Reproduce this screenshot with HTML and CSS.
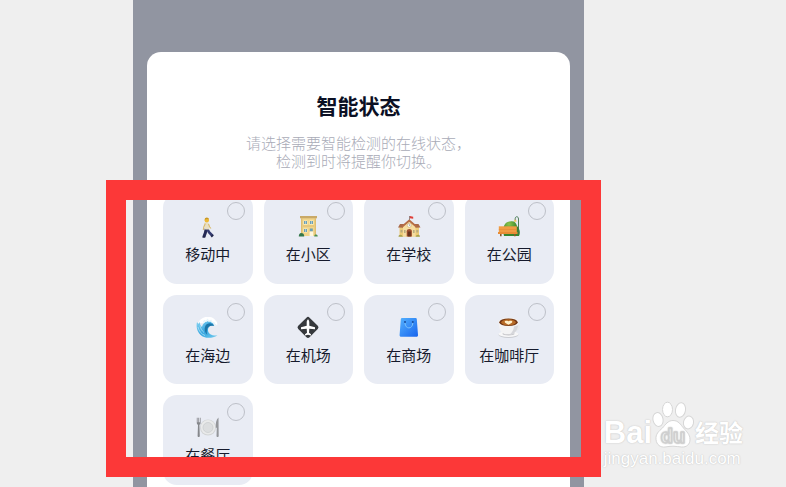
FILE: index.html
```html
<!DOCTYPE html>
<html lang="zh-CN">
<head>
    <meta charset="UTF-8">
    <meta name="viewport" content="width=device-width, initial-scale=1.0">
    <title>智能状态</title>
    <link rel="stylesheet" href="styles.css">
</head>
<body>
<div class="page">
    <main class="phone">
        <form class="sheet">
            <h1>智能状态</h1>
            <p class="desc">请选择需要智能检测的在线状态，<br>检测到时将提醒你切换。</p>
            <div class="status-grid">
                <label class="status">
                    <input type="checkbox" name="status" value="moving">
                    <svg class="icon" viewBox="0 0 24 24" aria-hidden="true">
                        <path d="M10.300 14.500 9.300 19 8 22.500" fill="none" stroke="#252a55" stroke-width="3"/>
                        <path d="M11 14.500l2 3.700 3.200 3.300" fill="none" stroke="#343b70" stroke-width="2.600"/>
                        <path d="M6.500 22h2.800v1.800H6.500zM14.600 22l2.400-1.800.8 1.300-2 2z" fill="#20264b"/>
                        <path d="M8.500 8.500l4.200.3.700 6.800-4.600-.2z" fill="#e9dfc2"/>
                        <path d="M9.300 9.500 7.800 13l-.5 3M12.500 10l1.200 3 1.300 1.500" fill="none" stroke="#d8b96c" stroke-width="1.100"/>
                        <circle cx="10.800" cy="6.300" r="2.200" fill="#edb936"/>
                        <path d="M8.600 5.800c.2-3 4.200-3 4.400-.2l-2-.5z" fill="#c99722"/>
                    </svg>
                    <span>移动中</span>
                </label>
                <label class="status">
                    <input type="checkbox" name="status" value="community">
                    <svg class="icon" viewBox="0 0 24 24" aria-hidden="true">
                        <path d="M5 3h15v19H5z" fill="#f0d58c"/>
                        <path d="M4 2h17v2.300H4z" fill="#c9a968"/>
                        <path d="M5 4.300h1.400V22H5zM18.600 4.300H20V22h-1.400z" fill="#dfbe70"/>
                        <path d="M7.500 6.500h4v4.300h-4zM13.500 6.500h4v4.300h-4zM7.500 14.500h4v4h-4z" fill="#fff0bb"/>
                        <path d="M8 7h3v3H8zM14 7h3v3h-3zM8 15h3v3H8zM13.800 14.500h3v3h-3z" fill="#6da0b6"/>
                        <path d="M9.300 7h.5v3h-.5zM15.300 7h.5v3h-.5zM9.300 15h.5v3h-.5z" fill="#e5eff0"/>
                        <path d="M13.600 17.500h3.600V22h-3.600z" fill="#fff7dc"/>
                        <path d="M7 11.600h11v.8H7z" fill="#d9b667"/>
                        <path d="M2.800 22.500c0-2.400 1.200-3.800 3-3.300 1.500-.4 2.600 1.500 2.400 3.300z" fill="#34784b"/>
                        <path d="M18.200 22.500c0-1.600 1-2.200 2-2 1.200 0 1.600 1 1.500 2z" fill="#4c9050"/>
                    </svg>
                    <span>在小区</span>
                </label>
                <label class="status">
                    <input type="checkbox" name="status" value="school">
                    <svg class="icon" viewBox="0 0 24 24" aria-hidden="true">
                        <path d="M12 2h.8v5H12z" fill="#777"/>
                        <path d="M12.800 2l3.400.7v2l-3.400-.5z" fill="#df3f38"/>
                        <path d="M2.500 13h19.500v9.500H2.500z" fill="#edcb78"/>
                        <path d="M1 13.500 3 10h6l-2 3.800zM23.500 13.500 21.500 10h-6l2 3.800z" fill="#aa6a49"/>
                        <path d="M6 22.500V12l6.300-5 6.200 5v10.500z" fill="#f6dda0"/>
                        <path d="M5 12.700l7.300-6.200 7.200 6.200" fill="none" stroke="#b66d46" stroke-width="1.800"/>
                        <circle cx="12.300" cy="11.300" r="2" fill="#fff" stroke="#c6a568" stroke-width=".6"/>
                        <path d="M12.300 10v1.500h1" fill="none" stroke="#666" stroke-width=".5"/>
                        <path d="M9.700 22.500v-5.200c0-3 5.200-3 5.200 0v5.200z" fill="#a1502e"/>
                        <path d="M10.800 22.500v-5h3v5z" fill="#693520"/>
                        <path d="M3.500 16h2v2.500h-2zM7 16h1.600v3H7zM16 16h1.600v3H16zM19.300 16h2v2.500h-2z" fill="#b9ac80"/>
                        <path d="M1.500 22.800c-.2-2.800 3.500-2.800 4.500 0zM18.600 22.800c.5-2.400 4.400-2.800 4.400 0z" fill="#a7a250"/>
                    </svg>
                    <span>在学校</span>
                </label>
                <label class="status">
                    <input type="checkbox" name="status" value="park">
                    <svg class="icon" viewBox="0 0 24 24" aria-hidden="true">
                        <defs>
                            <radialGradient id="bush" cx=".35" cy=".2">
                                <stop offset="0" stop-color="#8dc54a"/>
                                <stop offset="1" stop-color="#37852e"/>
                            </radialGradient>
                        </defs>
                        <path d="M7 22c-2-7 0-14.500 6-14.500 4-1 6 1 7 4.500 3 3 3.500 7 2 10z" fill="url(#bush)"/>
                        <path d="M21.500 20V5c0-3-3.300-3-3.300-.300V6" fill="none" stroke="#41744d" stroke-width=".9"/>
                        <path d="M17.300 5.800h1.900l.3 2H17z" fill="#efc45b"/>
                        <path d="M1.800 12.300h18v6H1.800z" fill="#f19c43"/>
                        <path d="M1.800 15.300h18v.4h-18z" fill="#dd842f"/>
                        <path d="M1 18h19.500v2H1z" fill="#e88c35"/>
                        <path d="M3 20h1.600v2.300H3zM17 20h1.600v2.300H17z" fill="#8b5929"/>
                    </svg>
                    <span>在公园</span>
                </label>
                <label class="status">
                    <input type="checkbox" name="status" value="seaside">
                    <svg class="icon" viewBox="0 0 24 24" aria-hidden="true">
                        <defs>
                            <linearGradient id="wave" x1="0" y1="0" x2="1" y2="1">
                                <stop offset="0" stop-color="#8bd6f3"/>
                                <stop offset=".5" stop-color="#36a5df"/>
                                <stop offset="1" stop-color="#75cef0"/>
                            </linearGradient>
                        </defs>
                        <path d="M2 8C4 4 8 1.500 12 2.200c3-.8 6 .8 7.300 3 2 1.500 2.500 3.600 1.700 5.200-2-2.600-5-3.700-8-2z" fill="#fff"/>
                        <path d="M1 7c-1.500 6 1 12.500 7 15 4 1.500 9 1 13.500-1.500-5.500.5-9-1.200-9.500-5-.4-3.500 2.400-5.800 6.300-4.700C16.800 6.500 12 4.700 8.500 7.700 7 9 6.200 10.500 6 12 4.200 10.500 3.500 8.500 4 6.500L2.500 9z" fill="url(#wave)"/>
                        <path d="M18.300 10.800C16 7.200 11 7.500 9.300 11c-1.300 3.100-.6 6.400 2 8.900-1.300-4.600-.1-8.700 4-9.200 1.200-.1 2-.1 3 .1z" fill="#1d76a8"/>
                        <path d="M2 12c1 4 3 7 7 8.500M4 10.500c.5 3 2 5.500 4 7" fill="none" stroke="#b9e8f8" stroke-width=".7"/>
                        <path d="M7 7.500l1.500-2 1.500 1 1.500-2 1.500 1.700 2-1 1 2 2 .3.500 2.200 1.700.7" fill="none" stroke="#e6f5fb" stroke-width="1.200"/>
                    </svg>
                    <span>在海边</span>
                </label>
                <label class="status">
                    <input type="checkbox" name="status" value="airport">
                    <svg class="icon" viewBox="0 0 24 24" aria-hidden="true">
                        <rect x="4" y="4.400" width="16" height="16" rx="2.200" transform="rotate(45 12 12.400)" fill="#36393d"/>
                        <path d="M12 4.200c-1 .8-1.300 2-1.300 3.300v3.200L5 12.200v2l5.700-.4.300 4-2 1.500v1.200l3-.7 3 .7v-1.200l-2-1.500.300-4 5.700.4v-2l-5.700-1.500V7.500c0-1.300-.3-2.500-1.300-3.300z" fill="#fff"/>
                    </svg>
                    <span>在机场</span>
                </label>
                <label class="status">
                    <input type="checkbox" name="status" value="mall">
                    <svg class="icon" viewBox="0 0 24 24" aria-hidden="true">
                        <defs>
                            <linearGradient id="bag" x1="0" y1="0" x2="1" y2="1">
                                <stop offset="0" stop-color="#53b1ff"/>
                                <stop offset="1" stop-color="#1764ed"/>
                            </linearGradient>
                        </defs>
                        <path d="M5 3h13.500c.8 0 1.200.4 1.300 1.200L21 20c.1 1.200-.6 1.800-1.600 1.800H4.200c-1 0-1.700-.7-1.600-1.800L3.800 4.200C3.900 3.400 4.300 3 5 3z" fill="url(#bag)"/>
                        <circle cx="8" cy="7" r="1" fill="#174a9c"/>
                        <circle cx="15.800" cy="7" r="1" fill="#174a9c"/>
                        <path d="M8 8.300c.3 6.300 7.500 6.300 7.800 0" fill="none" stroke="#7cc2fb" stroke-width="1" stroke-linecap="round"/>
                    </svg>
                    <span>在商场</span>
                </label>
                <label class="status">
                    <input type="checkbox" name="status" value="cafe">
                    <svg class="icon" viewBox="0 0 24 24" aria-hidden="true">
                        <ellipse cx="11.500" cy="19.700" rx="10" ry="3.200" fill="#c9cbd0"/>
                        <ellipse cx="11.500" cy="19" rx="10" ry="3" fill="#f7f7f8"/>
                        <ellipse cx="11.500" cy="18.800" rx="6" ry="1.700" fill="#c6c6ca"/>
                        <path d="M19.500 9.500c4 .2 3.500 5.700-2 5.800" fill="none" stroke="#e7e8ea" stroke-width="1.600"/>
                        <path d="M1.800 7c0 6 1.200 10 6 12.200h7.400c4.500-2 6-6.500 6-12.200z" fill="#f3f3f4"/>
                        <path d="M17 11.500c-.4 3.500-1.800 6-4 7.700h2.200c4-1.800 5.500-5.200 5.900-9z" fill="#d5d6da"/>
                        <ellipse cx="11.500" cy="7" rx="9.900" ry="4.200" fill="#f7f4ef"/>
                        <ellipse cx="11.500" cy="7.200" rx="9.200" ry="3.800" fill="#713715"/>
                        <ellipse cx="11.500" cy="7.300" rx="7.200" ry="3" fill="#b86b26"/>
                        <path d="M11.500 9.700C5.500 7.500 7.500 4.800 11.500 6.200c4-1.400 6 1.300 0 3.500z" fill="#fff1ca"/>
                    </svg>
                    <span>在咖啡厅</span>
                </label>
                <label class="status">
                    <input type="checkbox" name="status" value="restaurant">
                    <svg class="icon" viewBox="0 0 24 24" aria-hidden="true">
                        <circle cx="12" cy="12.500" r="8" fill="#d2d4d5"/>
                        <circle cx="12" cy="12.300" r="7.200" fill="#e9eaea"/>
                        <circle cx="12" cy="12.500" r="5" fill="#dcdedf" stroke="#c4c7c9" stroke-width=".6"/>
                        <path d="M.8 2.800v5c0 1.200.5 1.800 1.200 2L1.600 21c0 1.300 2.200 1.300 2.200 0L3.400 9.800c.8-.2 1.200-.8 1.200-2v-5h-.8v4.500H3V2.800h-.7v4.500h-.7V2.800z" fill="#85878b"/>
                        <path d="M22.500 2.500c-2.300 2-3 6-2.700 10.200h1L20.500 21c0 1.300 2.200 1.300 2.200 0z" fill="#94969a"/>
                    </svg>
                    <span>在餐厅</span>
                </label>
            </div>
        </form>
        <div class="highlight"></div>
    </main>
    <div class="watermark">
        <div class="brand">
            <span class="bai">Bai</span>
            <svg class="paw" viewBox="0 0 43 47" aria-label="du">
                <g fill="#fff" stroke="#d6d6d6">
                    <ellipse cx="6" cy="18.500" rx="5" ry="7" transform="rotate(-12 6 18.500)"/>
                    <ellipse cx="15.500" cy="8.500" rx="5" ry="7.300"/>
                    <ellipse cx="28.500" cy="9" rx="5" ry="7.300" transform="rotate(10 28.500 9)"/>
                    <ellipse cx="36.500" cy="21.500" rx="5" ry="6.500" transform="rotate(12 36.500 21.500)"/>
                    <path d="M21 19.500c-5 0-7.500 4-10.500 7.500C6.500 30.500 3.500 33 4 38.500c.6 5.500 4.500 8 9 7.500 3-.4 5-.8 8-.8s5.500.6 8.500.8c5 .4 8.500-2.500 8.500-7.500s-3.500-8-6.500-11.500c-3-3.500-5-7.500-10.500-7.500z"/>
                </g>
                <text class="du" x="21" y="42" text-anchor="middle">du</text>
            </svg>
            <span class="jingyan">经验</span>
        </div>
        <div class="site">jingyan.baidu.com</div>
    </div>
</div>
</body>
</html>
```
FILE: styles.css
```css
* {
    box-sizing: border-box;
}
body {
    margin: 0;
    background-color: #efefef;
    font-family: "Noto Sans CJK SC", "Noto Sans", sans-serif;
    color: #161a2c;
}
.page {
    position: relative;
    display: grid;
    grid-template-columns: minmax(0, 133fr) minmax(0, 451fr) minmax(0, 202fr);
    min-height: 100vh;
}
.phone {
    grid-column: 2;
    position: relative;
    padding: 52px 14px 0;
    background-color: #9195a1;
}
.sheet {
    padding: 38px 16px 2px;
    border-radius: 14px 14px 0 0;
    background-color: #fff;
}
h1 {
    margin: 0;
    font-size: 21px;
    line-height: 30px;
    font-weight: bold;
    text-align: center;
    color: #0b1024;
}
.desc {
    margin: 14px 0 24px;
    font-size: 15px;
    line-height: 18px;
    font-weight: 300;
    text-align: center;
    color: #a9abb7;
}
.status-grid {
    display: grid;
    grid-template-columns: repeat(4, minmax(0, 1fr));
    align-items: start;
    gap: 11px;
}
.status {
    position: relative;
    display: flex;
    flex-direction: column;
    align-items: center;
    gap: 6px;
    aspect-ratio: 1;
    padding-top: 20px;
    border-radius: 14px;
    background-color: #e9ecf4;
    font-size: 15px;
    line-height: 20px;
    cursor: pointer;
}
.status input {
    appearance: none;
    position: absolute;
    top: 8px;
    right: 8px;
    width: 18px;
    height: 18px;
    margin: 0;
    border: 1px solid #bdc0c8;
    border-radius: 50%;
    cursor: pointer;
}
.status input:checked {
    border: 5px solid #2f7bf5;
}
.icon {
    width: 24px;
    height: 24px;
}
/* red box drawn over the option list */
.highlight {
    position: absolute;
    top: 180px;
    right: -17px;
    bottom: 10px;
    left: -27px;
    border: 20px solid #fc3838;
    pointer-events: none;
}
.watermark {
    position: absolute;
    right: 43px;
    bottom: 17px;
    color: #fff;
    font-family: "Liberation Sans", "Noto Sans CJK SC", sans-serif;
    text-shadow: 0 0 1px #c4c4c4, 0 0 2px #d4d4d4;
}
.brand {
    display: flex;
    align-items: flex-end;
    height: 47px;
}
.bai {
    font-size: 31px;
    line-height: 31px;
    font-weight: bold;
}
.paw {
    width: 43px;
    height: 47px;
}
.du {
    font-size: 20px;
    font-weight: bold;
    fill: #fff;
    stroke: #d0d0d0;
}
.jingyan {
    font-size: 24px;
    line-height: 28px;
    font-weight: bold;
}
.site {
    font-size: 17px;
    line-height: 22px;
}
```
